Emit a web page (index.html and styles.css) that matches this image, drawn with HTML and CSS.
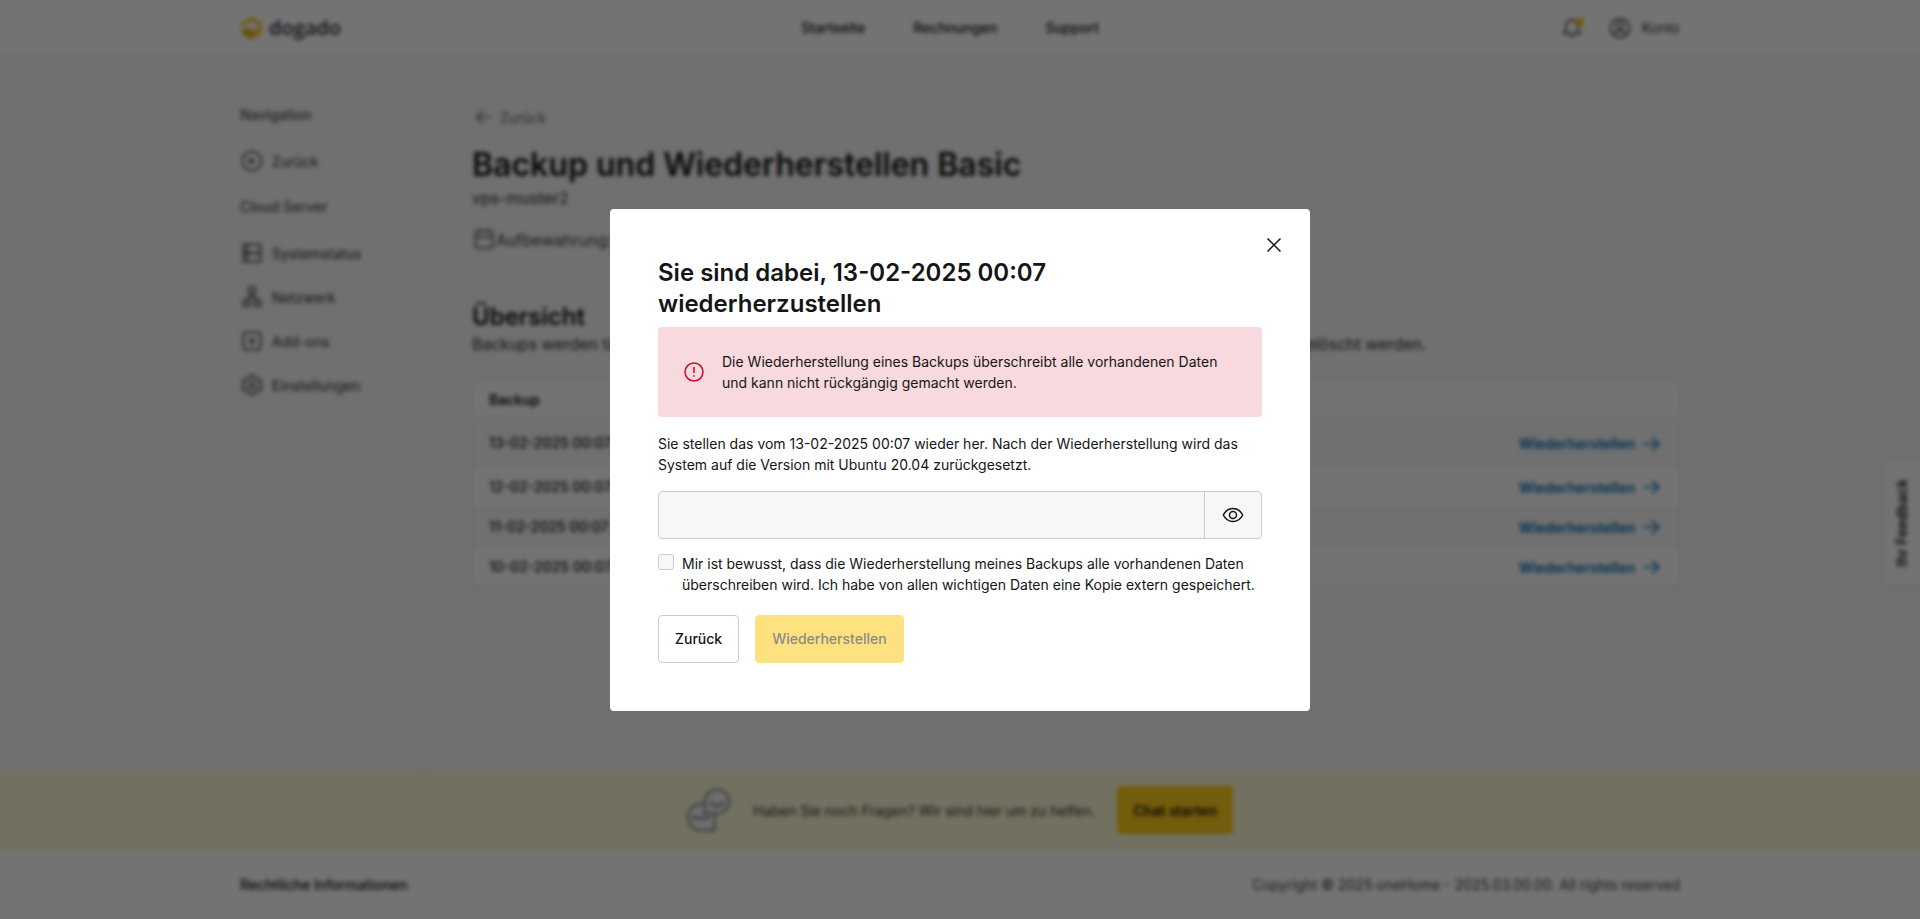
FILE: index.html
```
<!DOCTYPE html>
<html lang="de">
<head>
<meta charset="utf-8">
<meta name="viewport" content="width=device-width, initial-scale=1">
<title>Backup und Wiederherstellen Basic</title>
<link rel="stylesheet" href="styles.css">
</head>
<body>
<div class="page">
  <header class="header">
    <div class="container header-row">
      <a class="logo" href="#">
        <svg class="logo-mark" viewBox="0 0 24 26" aria-hidden="true"><path d="M1.600 11V7.600L11.500 2l9.900 5.600v11L11.500 24.200 1.600 18.600V15l2.400-1.500 2 1.200 4-2.200 2.500 1.200.5 2.300 2-.8 1.500.8 1.200-.7V9.400l-6.200-3.500-6.200 3.500V12Z" fill="#f6c423"/><path d="M1.600 16.500 9 13.500l3 3.500 4 .5-4.500 6.700-9.900-5.600Z" fill="#e5ae14"/></svg>
        <span>dogado</span>
      </a>
      <nav class="top-nav">
        <a href="#">Startseite</a>
        <a href="#">Rechnungen</a>
        <a href="#">Support</a>
      </nav>
      <div class="account">
        <button class="bell" type="button" aria-label="Benachrichtigungen">
          <svg class="icon" viewBox="0 0 24 24"><path d="M4 17.500h16l-2-3V10a6 6 0 0 0-12 0v4.500l-2 3ZM12 2.500V4M10 20.500h4"/></svg>
          <span class="bell-dot"></span>
        </button>
        <a class="account-link" href="#">
          <svg class="icon" viewBox="0 0 24 24"><circle cx="12" cy="12" r="9.500"/><circle cx="12" cy="9.500" r="3.500"/><path d="M5.500 19c1.500-3 3.800-4 6.500-4s5 1 6.500 4"/></svg>
          <span>Konto</span>
        </a>
      </div>
    </div>
  </header>

  <div class="container body-row">
    <aside class="sidebar">
      <h2 class="side-title">Navigation</h2>
      <ul class="side-list">
        <li><a href="#"><svg class="icon" viewBox="0 0 24 24"><circle cx="12" cy="12" r="9.500"/><path d="M15 12H9M12 9l-3 3 3 3"/></svg>Zurück</a></li>
      </ul>
      <h2 class="side-title">Cloud Server</h2>
      <ul class="side-list">
        <li><a href="#"><svg class="icon" viewBox="0 0 24 24"><rect x="3.500" y="3.500" width="17" height="8.500"/><rect x="3.500" y="12" width="17" height="8.500"/><path d="M7 3.500v17"/></svg>Systemstatus</a></li>
        <li><a href="#"><svg class="icon" viewBox="0 0 24 24"><rect x="9" y="2.500" width="6" height="6"/><rect x="3.500" y="15.500" width="6" height="5.500"/><rect x="14.500" y="15.500" width="6" height="5.500"/><path d="M12 8.500V12M6.500 15.500 9 12h6l2.500 3.500"/></svg>Netzwerk</a></li>
        <li><a href="#"><svg class="icon" viewBox="0 0 24 24"><rect x="3.500" y="3.500" width="17" height="17" rx="2"/><path d="M12 8v8M8 12h8"/></svg>Add-ons</a></li>
        <li><a href="#"><svg class="icon" viewBox="0 0 24 24"><path d="M10 2.500h4l.8 2.800 2 1.200 2.900-.7 2 3.400-2.100 2.100v1.400l2.100 2.100-2 3.400-2.900-.7-2 1.200-.8 2.800h-4l-.8-2.800-2-1.200-2.900.7-2-3.400 2.100-2.100v-1.400L2.300 9.200l2-3.400 2.900.7 2-1.200Z"/><circle cx="12" cy="12" r="3"/></svg>Einstellungen</a></li>
      </ul>
    </aside>

    <main class="content">
      <a class="back" href="#"><svg class="icon" viewBox="0 0 24 24"><path d="M19 12H4.500M11.500 5l-7 7 7 7"/></svg>Zurück</a>
      <h1>Backup und Wiederherstellen Basic</h1>
      <p class="server">vps-muster2</p>
      <p class="retention"><svg class="icon" viewBox="0 0 24 24"><rect x="3.500" y="3" width="17" height="17" rx="2"/><path d="M3.500 9h17M8 1v4M16 1v4"/></svg>Aufbewahrung: 14 Tage</p>
      <h2 class="section-title">Übersicht</h2>
      <p class="lead">Backups werden täglich automatisch erstellt, und nach Ablauf der Aufbewahrung ohne weitere Ankündigung gelöscht werden.</p>
      <table class="backups">
        <thead><tr><th colspan="2">Backup</th></tr></thead>
        <tbody>
          <tr><td>13-02-2025 00:07</td><td><a href="#">Wiederherstellen<svg class="icon" viewBox="0 0 24 24"><path d="M2.500 12H21M13 4l8 8-8 8"/></svg></a></td></tr>
          <tr><td>12-02-2025 00:07</td><td><a href="#">Wiederherstellen<svg class="icon" viewBox="0 0 24 24"><path d="M2.500 12H21M13 4l8 8-8 8"/></svg></a></td></tr>
          <tr><td>11-02-2025 00:07</td><td><a href="#">Wiederherstellen<svg class="icon" viewBox="0 0 24 24"><path d="M2.500 12H21M13 4l8 8-8 8"/></svg></a></td></tr>
          <tr><td>10-02-2025 00:07</td><td><a href="#">Wiederherstellen<svg class="icon" viewBox="0 0 24 24"><path d="M2.500 12H21M13 4l8 8-8 8"/></svg></a></td></tr>
        </tbody>
      </table>
    </main>
  </div>

  <section class="help">
    <svg class="help-icon" viewBox="0 0 44 44" aria-hidden="true"><g fill="#f4f4f6" stroke="#7c7c80" stroke-width="2"><path d="M27.500 42.500H14.500A13.200 13.200 0 1 1 27.500 29Z"/><path d="M18 25.500V13.500a12 12 0 1 1 12 12Z"/></g><path d="M23.500 14c2.500 5 10.500 5 13 0" fill="none" stroke="#666" stroke-width="2"/><g fill="#555"><circle cx="7.500" cy="30" r="1.900"/><circle cx="13.500" cy="30" r="1.900"/><circle cx="19.500" cy="30" r="1.900"/></g></svg>
    <p>Haben Sie noch Fragen? Wir sind hier um zu helfen.</p>
    <button class="chat" type="button">Chat starten</button>
  </section>

  <footer class="footer">
    <div class="container footer-row">
      <a href="#">Rechtliche Informationen</a>
      <small>Copyright © 2025 oneHome - 2025.03.00.00. All rights reserved</small>
    </div>
  </footer>
  <button class="feedback" type="button">Ihr Feedback</button>
</div>

<div class="overlay">
  <form class="modal" role="dialog" aria-modal="true" aria-labelledby="modal-title">
    <button class="close" type="button" aria-label="Schließen"><svg viewBox="0 0 16 16"><path d="M1.500 1.500l13 13M14.500 1.500l-13 13"/></svg></button>
    <h2 id="modal-title">Sie sind dabei, 13-02-2025 00:07 wiederherzustellen</h2>
    <div class="alert" role="alert">
      <svg viewBox="0 0 20 20"><circle cx="10" cy="10" r="9"/><path d="M10 5v6M10 13.200v1.600"/></svg>
      <p>Die Wiederherstellung eines Backups überschreibt alle vorhandenen Daten und kann nicht rückgängig gemacht werden.</p>
    </div>
    <p>Sie stellen das vom 13-02-2025 00:07 wieder her. Nach der Wiederherstellung wird das System auf die Version mit Ubuntu 20.04 zurückgesetzt.</p>
    <div class="password">
      <input type="password" aria-label="Passwort">
      <button type="button" aria-label="Passwort anzeigen"><svg viewBox="0 0 22 16"><path d="M1.300 8C3.500 3.600 7 1.500 11 1.500S18.500 3.600 20.700 8C18.500 12.400 15 14.500 11 14.500S3.500 12.400 1.300 8Z"/><circle cx="11" cy="8" r="3.500"/></svg></button>
    </div>
    <label class="confirm">
      <input type="checkbox">
      <span>Mir ist bewusst, dass die Wiederherstellung meines Backups alle vorhandenen Daten überschreiben wird. Ich habe von allen wichtigen Daten eine Kopie extern gespeichert.</span>
    </label>
    <div class="actions">
      <button class="secondary" type="button">Zurück</button>
      <button class="primary" type="submit" disabled>Wiederherstellen</button>
    </div>
  </form>
</div>
</body>
</html>
```
FILE: styles.css
```
* { box-sizing: border-box; }
body, h1, h2, p, ul { margin: 0; padding: 0; }
body {
  background: #f8f8f8;
  color: #151515;
  font: 14px/21px Inter, "Liberation Sans", sans-serif;
}
a { color: inherit; text-decoration: none; }
button, input { font: inherit; color: inherit; }
ul { list-style: none; }
.icon {
  width: 24px;
  height: 24px;
  flex: none;
  fill: none;
  stroke: currentColor;
  stroke-width: 1.5;
}
.page { display: flex; flex-direction: column; min-height: 100vh; }
.container { width: 75%; margin: 0 auto; }

.header { background: #fff; border-bottom: 1px solid #eee; }
.header-row {
  display: grid;
  grid-template-columns: 1fr auto 1fr;
  align-items: center;
  height: 55px;
}
.logo {
  display: flex;
  align-items: center;
  gap: 5px;
  color: #26323d;
  font: 600 20px/24px "Open Sans", sans-serif;
}
.logo-mark { width: 24px; height: 26px; }
.top-nav { display: flex; gap: 48px; margin-right: 20px; font-weight: 500; }
.account { display: flex; justify-content: flex-end; align-items: center; gap: 24px; color: #333; }
.account-link { display: flex; align-items: center; gap: 10px; }
.bell { position: relative; padding: 0; border: 0; background: none; display: flex; }
.bell-dot {
  position: absolute;
  top: 2px;
  right: 0;
  width: 8px;
  height: 8px;
  border-radius: 50%;
  background: #ffc400;
}

.body-row { display: flex; flex: 1; }
.sidebar {
  width: 184px;
  flex: none;
  padding-top: 48px;
  border-right: 1px solid #eaeaea;
}
.side-title { font-size: 14px; line-height: 22px; font-weight: 500; color: #555; }
.side-list { padding: 13px 0; color: #333; }
.side-list li { height: 44px; display: flex; align-items: center; }
.side-list a { display: flex; align-items: center; gap: 8px; }

.content { flex: 1; padding: 48px 0 0 48px; }
.back { display: flex; align-items: center; gap: 4px; height: 26px; color: #666; }
.content h1 { margin-top: 14px; font-size: 32px; line-height: 42px; font-weight: 600; }
.server { font-size: 16px; line-height: 24px; color: #333; }
.retention { display: flex; align-items: center; margin-top: 16px; font-size: 16px; line-height: 28px; color: #444; }
.section-title { margin-top: 48px; font-size: 24px; line-height: 30px; font-weight: 600; }
.lead { font-size: 16px; line-height: 24px; color: #333; white-space: nowrap; }
.backups {
  width: 100%;
  margin-top: 24px;
  border: 1px solid #e4e4e4;
  border-collapse: collapse;
  background: #fff;
}
.backups th { height: 38px; padding: 0 16px; text-align: left; font-weight: 600; border-bottom: 1px solid #e4e4e4; }
.backups td { height: 40px; padding: 0 18px 0 16px; font-weight: 500; }
.backups tbody tr:first-child td { height: 48px; }
.backups tbody tr:nth-child(odd) { background: #f8f8f8; }
.backups td:last-child { text-align: right; }
.backups a { display: inline-flex; align-items: center; gap: 6px; color: #0071b3; font-weight: 600; vertical-align: middle; }
.backups .icon { width: 20px; height: 20px; stroke-width: 2; }

.help {
  display: flex;
  align-items: center;
  justify-content: center;
  gap: 22px;
  height: 80px;
  background: #fdf9d5;
}
.help-icon { width: 44px; height: 44px; }
.help p { color: #333; }
.chat { height: 48px; padding: 0 16px; border: 0; border-radius: 3px; background: #ffcc18; font-weight: 600; }
.footer { background: #fff; }
.footer-row { display: flex; align-items: center; justify-content: space-between; height: 69px; }
.footer a { padding-right: 16px; border-right: 1px solid #eee; font-weight: 500; }
.footer small { font-size: 14px; color: #444; }
.feedback {
  position: fixed;
  top: 50%;
  right: 0;
  width: 38px;
  height: 126px;
  padding: 0;
  border: 1px solid #e4e4e4;
  border-right: 0;
  border-radius: 3px 0 0 3px;
  background: #fff;
  writing-mode: sideways-lr;
  font-weight: 600;
}

.overlay {
  position: fixed;
  inset: 0;
  display: flex;
  align-items: center;
  justify-content: center;
  background: rgba(0, 0, 0, .55);
  backdrop-filter: blur(2px);
}
.modal {
  position: relative;
  width: 700px;
  max-width: 100%;
  padding: 48px;
  border-radius: 4px;
  background: #fff;
  display: flex;
  flex-direction: column;
  gap: 16px;
}
.modal h2 { margin-bottom: -8px; font-size: 24px; line-height: 31px; font-weight: 600; }
.modal svg { flex: none; fill: none; stroke: currentColor; stroke-width: 1.5; }
.close { position: absolute; top: 24px; right: 24px; width: 24px; height: 24px; padding: 4px; border: 0; background: none; }
.close svg { display: block; width: 16px; height: 16px; }
.alert { display: flex; align-items: center; gap: 18px; padding: 24px 26px; border-radius: 4px; background: #f8d9de; }
.alert svg { width: 20px; height: 20px; color: #cf0a2c; }
.password { display: flex; height: 48px; border: 1px solid #ccc; border-radius: 4px; background: #f7f7f7; overflow: hidden; }
.password input { flex: 1; min-width: 0; border: 0; padding: 0 16px; background: none; }
.password button { width: 57px; padding: 0; border: 0; border-left: 1px solid #ccc; background: none; display: grid; place-items: center; }
.password svg { width: 22px; height: 16px; }
.confirm { display: flex; gap: 8px; margin: -2px 0 4px; }
.confirm input { appearance: none; flex: none; width: 16px; height: 16px; margin: 1px 0; border: 1px solid #ccc; border-radius: 3px; background: #f7f7f7; }
.actions { display: flex; gap: 16px; }
.actions button { height: 48px; padding: 0 16px; border: 1px solid #ccc; border-radius: 4px; background: #fff; font-weight: 500; }
.actions .primary { border-color: #fee27f; background: #fee27f; color: #8a8a8a; }
```
